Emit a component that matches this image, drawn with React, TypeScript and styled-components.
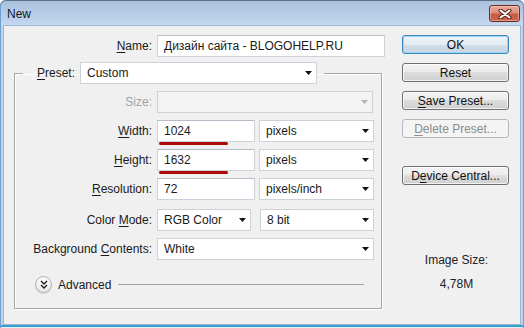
import React from 'react';
import styled, { createGlobalStyle } from 'styled-components';

const GlobalStyle = createGlobalStyle`
  html, body {
    margin: 0;
    padding: 0;
    background: #ffffff;
  }
  body {
    font-family: "Liberation Sans", Arial, sans-serif;
    font-size: 12px;
    color: #1a1a1a;
  }
  * {
    box-sizing: border-box;
  }
`;

const Window = styled.div`
  width: 524px;
  height: 328px;
  display: flex;
  flex-direction: column;
  padding: 0 3px 3px 3px;
  border-radius: 6px 6px 0 0;
  background: linear-gradient(#a8c0dd 0px, #c3d7ee 25px, #bed4ec 26px, #bed4ec 100%);
  box-shadow: inset 1px 0 0 #6d9fd3, inset -1px 0 0 #6d9fd3, inset 0 1px 0 #5b6f86,
    inset 0 -1px 0 #dcecf8, inset 0 -3px 0 #36a1cf;
`;

const TitleBar = styled.div`
  height: 25px;
  display: flex;
  align-items: flex-start;
  justify-content: space-between;
  padding: 0 0 0 4px;
`;

const Title = styled.span`
  margin-top: 7px;
  font-size: 12px;
  color: #101828;
`;

const CloseButton = styled.div`
  width: 31px;
  height: 17px;
  margin: 5px 1px 0 0;
  display: flex;
  align-items: center;
  justify-content: center;
  border: 1px solid #6e2b22;
  border-radius: 3px;
  background: linear-gradient(#e9ab9c 0%, #dc8c79 45%, #c85a44 55%, #c9654c 100%);
  box-shadow: inset 0 0 0 1px rgba(255, 220, 210, 0.45);
`;

const Client = styled.div`
  flex: 1;
  display: flex;
  background: #f0f0f0;
  border: 1px solid #9cb6d3;
`;

const LeftPanel = styled.div`
  width: 390px;
  padding: 9px 0 0 10px;
  display: flex;
  flex-direction: column;
`;

const RightPanel = styled.div`
  width: 115px;
  padding: 9px 0 33px 8px;
  display: flex;
  flex-direction: column;
  gap: 9px;
`;

const NameRow = styled.div`
  display: grid;
  grid-template-columns: 138px 228px;
  column-gap: 5px;
  align-items: center;
`;

const Label = styled.label<{ $disabled?: boolean }>`
  text-align: right;
  white-space: nowrap;
  color: ${p => (p.$disabled ? '#a3a3a3' : '#1a1a1a')};
`;

const Key = styled.span`
  text-decoration: underline;
  text-underline-offset: 2px;
`;

const Group = styled.fieldset`
  width: 368px;
  margin: 5px 0 0 0;
  padding: 0 0 15px 0;
  min-width: 0;
  border: 1px solid #a7a7a7;
  box-shadow: 1px 1px 0 #ffffff, inset 1px 1px 0 #ffffff;
`;

const Legend = styled.legend`
  margin-left: 8px;
  padding: 0 7px 0 14px;
  display: flex;
  align-items: center;
  gap: 5px;
`;

const Rows = styled.div`
  display: flex;
  flex-direction: column;
  gap: 7px;
  padding-top: 7px;
`;

const Row = styled.div<{ $spaced?: boolean }>`
  display: grid;
  grid-template-columns: 137px auto;
  column-gap: 5px;
  align-items: center;
  margin-top: ${p => (p.$spaced ? 2 : 0)}px;
`;

const Controls = styled.div<{ $gap: number }>`
  display: flex;
  gap: ${p => p.$gap}px;
`;

const Field = styled.div<{ $w: number }>`
  position: relative;
  width: ${p => p.$w}px;
  height: 22px;
  display: flex;
  align-items: center;
  padding: 0 6px;
  background: #ffffff;
  border: 1px solid #cdd2d9;
  border-top-color: #b5bbc4;
  color: #1a1a1a;
  white-space: nowrap;
`;

const ComboBox = styled(Field)<{ $disabled?: boolean }>`
  justify-content: space-between;
  padding-right: 4px;
  background: ${p => (p.$disabled ? '#f4f4f4' : '#ffffff')};
  border-color: ${p => (p.$disabled ? '#d0d0d0' : '#cdd2d9')};
`;

const Mark = styled.span`
  position: absolute;
  left: 1px;
  top: calc(100% + 1px);
  width: 69px;
  height: 3px;
  border-radius: 2px;
  background: #ad0a0a;
`;

const AdvancedRow = styled.div`
  display: flex;
  align-items: center;
  gap: 6px;
  margin-top: 16px;
  padding: 0 17px 0 20px;
`;

const RoundIcon = styled.div`
  width: 17px;
  height: 17px;
  border-radius: 50%;
  display: flex;
  align-items: center;
  justify-content: center;
  border: 1px solid #b3b3b3;
  background: radial-gradient(circle at 50% 35%, #ffffff 0%, #f1f1f1 55%, #d6d6d6 100%);
  box-shadow: 0 1px 1px rgba(0, 0, 0, 0.12);
`;

const Rule = styled.div`
  flex: 1;
  height: 1px;
  margin-left: 1px;
  background: #a3a3a3;
`;

const Button = styled.div<{ $default?: boolean; $disabled?: boolean }>`
  width: 107px;
  height: 19px;
  display: flex;
  align-items: center;
  justify-content: center;
  border-radius: 3px;
  white-space: nowrap;
  color: ${p => (p.$disabled ? '#8c8c8c' : '#111111')};
  border: 1px solid
    ${p => (p.$default ? '#3c86bd' : p.$disabled ? '#b5b9bc' : '#707070')};
  background: ${p =>
    p.$disabled
      ? '#f4f4f4'
      : p.$default
      ? 'linear-gradient(#edf4f9 0%, #e3ecf3 50%, #d2dee8 50%, #c8d6e2 100%)'
      : 'linear-gradient(#f3f3f3 0%, #ebebeb 50%, #dddddd 50%, #cfcfcf 100%)'};
  box-shadow: ${p =>
    p.$default
      ? 'inset 0 0 0 1px #9ad6f5'
      : p.$disabled
      ? 'none'
      : 'inset 0 0 0 1px rgba(255,255,255,0.7)'};
`;

const DeviceButton = styled(Button)`
  margin-top: 19px;
`;

const ImageSize = styled.div`
  margin-top: auto;
  display: flex;
  flex-direction: column;
  align-items: center;
  gap: 10px;
  padding-left: 2px;
  color: #222222;
  line-height: 14px;
`;

const Arrow: React.FC<{ disabled?: boolean }> = ({ disabled }) => (
  <svg width="7" height="4" viewBox="0 0 7 4">
    <path d="M0 0h7L3.5 4z" fill={disabled ? '#b4b4b4' : '#111111'} />
  </svg>
);

const Combo: React.FC<{ w: number; value?: string; disabled?: boolean }> = ({ w, value, disabled }) => (
  <ComboBox $w={w} $disabled={disabled}>
    <span>{value}</span>
    <Arrow disabled={disabled} />
  </ComboBox>
);

const App: React.FC = () => {
  return (
    <>
      <GlobalStyle />
      <Window>
        <TitleBar>
          <Title>New</Title>
          <CloseButton>
            <svg width="14" height="10" viewBox="0 0 14 10">
              <path d="M2.5 1.5L11.5 8.5M11.5 1.5L2.5 8.5" stroke="#5a2018" strokeWidth="4" strokeLinecap="round" />
              <path d="M2.5 1.5L11.5 8.5M11.5 1.5L2.5 8.5" stroke="#ffffff" strokeWidth="2" strokeLinecap="round" />
            </svg>
          </CloseButton>
        </TitleBar>
        <Client>
          <LeftPanel>
            <NameRow>
              <Label>
                <Key>N</Key>ame:
              </Label>
              <Field $w={228}>Дизайн сайта - BLOGOHELP.RU</Field>
            </NameRow>
            <Group>
              <Legend>
                <Label>
                  <Key>P</Key>reset:
                </Label>
                <Combo w={237} value="Custom" />
              </Legend>
              <Rows>
                <Row>
                  <Label $disabled>Size:</Label>
                  <Combo w={216} disabled />
                </Row>
                <Row>
                  <Label>
                    <Key>W</Key>idth:
                  </Label>
                  <Controls $gap={4}>
                    <Field $w={98}>
                      1024
                      <Mark />
                    </Field>
                    <Combo w={115} value="pixels" />
                  </Controls>
                </Row>
                <Row>
                  <Label>
                    <Key>H</Key>eight:
                  </Label>
                  <Controls $gap={4}>
                    <Field $w={98}>
                      1632
                      <Mark />
                    </Field>
                    <Combo w={115} value="pixels" />
                  </Controls>
                </Row>
                <Row>
                  <Label>
                    <Key>R</Key>esolution:
                  </Label>
                  <Controls $gap={4}>
                    <Field $w={98}>72</Field>
                    <Combo w={115} value="pixels/inch" />
                  </Controls>
                </Row>
                <Row $spaced>
                  <Label>
                    Color <Key>M</Key>ode:
                  </Label>
                  <Controls $gap={9}>
                    <Combo w={94} value="RGB Color" />
                    <Combo w={114} value="8 bit" />
                  </Controls>
                </Row>
                <Row>
                  <Label>
                    Background <Key>C</Key>ontents:
                  </Label>
                  <Combo w={217} value="White" />
                </Row>
              </Rows>
              <AdvancedRow>
                <RoundIcon>
                  <svg width="8" height="9" viewBox="0 0 8 9">
                    <path d="M1 1l3 3 3-3M1 5l3 3 3-3" fill="none" stroke="#1a1a1a" strokeWidth="1.4" />
                  </svg>
                </RoundIcon>
                <span>Advanced</span>
                <Rule />
              </AdvancedRow>
            </Group>
          </LeftPanel>
          <RightPanel>
            <Button $default>OK</Button>
            <Button>Reset</Button>
            <Button>
              <span>
                <Key>S</Key>ave Preset...
              </span>
            </Button>
            <Button $disabled>
              <span>
                <Key>D</Key>elete Preset...
              </span>
            </Button>
            <DeviceButton>
              <span>
                D<Key>e</Key>vice Central...
              </span>
            </DeviceButton>
            <ImageSize>
              <span>Image Size:</span>
              <span>4,78M</span>
            </ImageSize>
          </RightPanel>
        </Client>
      </Window>
    </>
  );
};

export default App;
